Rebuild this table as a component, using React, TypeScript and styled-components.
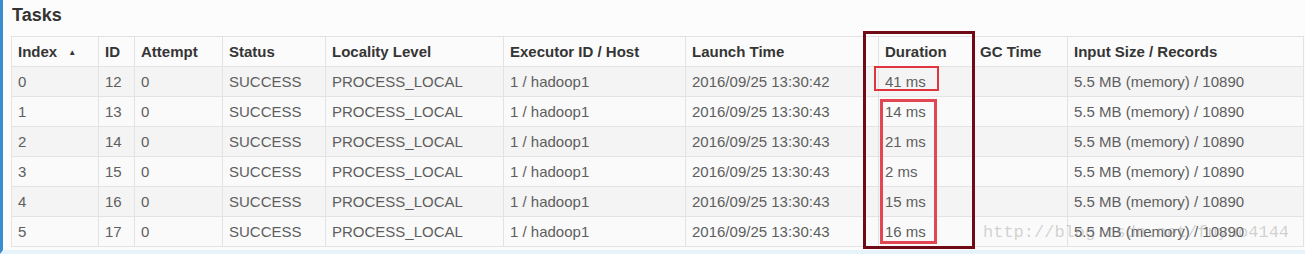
import React from "react";
import styled, { createGlobalStyle } from "styled-components";

const Global = createGlobalStyle`
  html, body { margin: 0; padding: 0; background: #fcfcfc; }
  * { box-sizing: border-box; }
`;

const Page = styled.div`
  position: relative;
  width: 1305px;
  height: 254px;
  display: flex;
  flex-direction: column;
  padding: 0 2px 0 8px;
  border-left: 3px solid #3a8dcf;
  border-bottom: 4px solid #e6f3fb;
  background: #fcfcfc;
  font-family: "Liberation Sans", Arial, sans-serif;
  overflow: hidden;
`;

const Title = styled.h3`
  margin: 0 0 0 1px;
  padding-top: 4px;
  height: 36px;
  line-height: 22px;
  font-size: 18px;
  font-weight: bold;
  color: #333;
`;

const Table = styled.table`
  width: 1292px;
  table-layout: fixed;
  border-collapse: collapse;
  border: 1px solid #e3e3e3;
`;

const Col = styled.col<{ $w: number }>`
  width: ${(p) => p.$w}px;
`;

const HeadRow = styled.tr`
  height: 30px;
  background: #fbfbfb;
`;

const Row = styled.tr<{ $striped: boolean }>`
  height: 30px;
  background: ${(p) => (p.$striped ? "#f4f4f4" : "#fafafa")};
`;

const HeadCell = styled.th`
  padding: 0 6px;
  text-align: left;
  vertical-align: middle;
  font-size: 15px;
  font-weight: bold;
  color: #353535;
  border: 1px solid #e3e3e3;
  white-space: nowrap;
  overflow: hidden;
`;

const Cell = styled.td`
  padding: 0 6px;
  vertical-align: middle;
  font-size: 15px;
  color: #5e5e5e;
  border: 1px solid #e3e3e3;
  white-space: nowrap;
  overflow: hidden;
`;

const SortArrow = styled.span`
  display: inline-block;
  margin-left: 11px;
  font-size: 8px;
  vertical-align: 2px;
  color: #333;
`;

const Frame = styled.div<{ $x: number; $y: number; $w: number; $h: number; $c: string; $t: number }>`
  position: absolute;
  left: ${(p) => p.$x}px;
  top: ${(p) => p.$y}px;
  width: ${(p) => p.$w}px;
  height: ${(p) => p.$h}px;
  border: ${(p) => p.$t}px solid ${(p) => p.$c};
  pointer-events: none;
`;

const Watermark = styled.div`
  position: absolute;
  left: 980px;
  top: 223px;
  font-family: "Liberation Mono", "Courier New", monospace;
  font-size: 17px;
  line-height: 20px;
  color: rgba(140, 140, 140, 0.38);
  pointer-events: none;
  white-space: nowrap;
`;

const columns = [
  { name: "Index", w: 87 },
  { name: "ID", w: 36 },
  { name: "Attempt", w: 88 },
  { name: "Status", w: 103 },
  { name: "Locality Level", w: 178 },
  { name: "Executor ID / Host", w: 182 },
  { name: "Launch Time", w: 193 },
  { name: "Duration", w: 95 },
  { name: "GC Time", w: 94 },
  { name: "Input Size / Records", w: 236 },
];

const rows = [
  { i: 0, id: 12, t: "2016/09/25 13:30:42", d: "41 ms" },
  { i: 1, id: 13, t: "2016/09/25 13:30:43", d: "14 ms" },
  { i: 2, id: 14, t: "2016/09/25 13:30:43", d: "21 ms" },
  { i: 3, id: 15, t: "2016/09/25 13:30:43", d: "2 ms" },
  { i: 4, id: 16, t: "2016/09/25 13:30:43", d: "15 ms" },
  { i: 5, id: 17, t: "2016/09/25 13:30:43", d: "16 ms" },
];

export default function App() {
  return (
    <>
      <Global />
      <Page>
        <Title>Tasks</Title>
        <Table>
          <colgroup>
            {columns.map((c) => (
              <Col key={c.name} $w={c.w} />
            ))}
          </colgroup>
          <thead>
            <HeadRow>
              {columns.map((c) => (
                <HeadCell key={c.name}>
                  {c.name}
                  {c.name === "Index" && <SortArrow>▲</SortArrow>}
                </HeadCell>
              ))}
            </HeadRow>
          </thead>
          <tbody>
            {rows.map((r) => (
              <Row key={r.i} $striped={r.i % 2 === 0}>
                <Cell>{r.i}</Cell>
                <Cell>{r.id}</Cell>
                <Cell>0</Cell>
                <Cell>SUCCESS</Cell>
                <Cell>PROCESS_LOCAL</Cell>
                <Cell>1 / hadoop1</Cell>
                <Cell>{r.t}</Cell>
                <Cell>{r.d}</Cell>
                <Cell></Cell>
                <Cell>5.5 MB (memory) / 10890</Cell>
              </Row>
            ))}
          </tbody>
        </Table>
        <Watermark>http://blog.csdn.net/fuyuo4144</Watermark>
        <Frame $x={860} $y={31} $w={112} $h={218} $c="#6e0b16" $t={3} />
        <Frame $x={871} $y={66} $w={65} $h={25} $c="#e0353f" $t={2} />
        <Frame $x={877} $y={99} $w={57} $h={145} $c="#e24652" $t={3} />
      </Page>
    </>
  );
}
